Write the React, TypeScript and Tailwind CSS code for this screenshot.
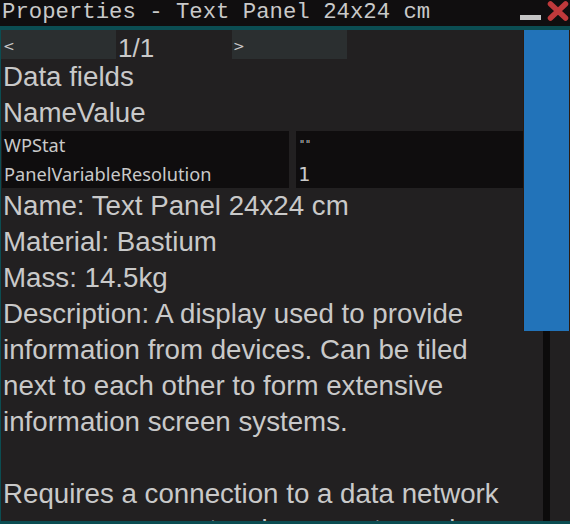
import React from "react";

const big = "font-['Liberation_Sans',Arial,sans-serif] text-[27.7px] leading-[36px] text-[#c9c9c9] whitespace-nowrap";

export default function App() {
  return (
    <div className="w-[570px] h-[524px] flex flex-col bg-[#100e0f] overflow-hidden">
      {/* title bar */}
      <div className="h-[26px] flex items-start shrink-0">
        <div className="pl-[2px] font-['Liberation_Mono',monospace] text-[22.3px] leading-[24px] text-[#c9c9c9] whitespace-nowrap">
          Properties - Text Panel 24x24 cm
        </div>
        <div className="flex-1" />
        <div className="w-[21px] h-[5px] bg-[#c4c4c4] mt-[15px] mr-[6px]" />
        <svg width="22" height="20" viewBox="0 0 22 20" className="mt-[1px] mr-[1px]">
          <path d="M3.5 3 L18.5 17 M18.5 3 L3.5 17" stroke="#c0393b" strokeWidth="5.5" strokeLinecap="round" />
        </svg>
      </div>
      <div className="h-[4px] bg-[#0b4d52] shrink-0" />
      {/* body */}
      <div className="flex-1 flex bg-[#222021] border-l border-b-[3px] border-[#0b4d52] overflow-hidden">
        <div className="w-[522px] flex flex-col overflow-hidden shrink-0">
          {/* nav row */}
          <div className="h-[29px] flex shrink-0">
            <div className="w-[115px] bg-[#2b2f30] pl-[2px] pt-[3px] flex items-center font-['DejaVu_Sans',sans-serif] text-[14px] text-[#c9c9c9]">&lt;</div>
            <div className="w-[116px] pl-[2px] font-['Liberation_Sans',Arial,sans-serif] text-[26px] leading-[36px] text-[#c9c9c9]">1/1</div>
            <div className="w-[115px] bg-[#2b2f30] pl-[1px] pt-[3px] flex items-center font-['DejaVu_Sans',sans-serif] text-[14px] text-[#c9c9c9]">&gt;</div>
          </div>
          <div className={`pl-[2px] ${big}`}>Data fields</div>
          <div className={`pl-[2px] ${big}`}>NameValue</div>
          {/* table */}
          <div className="h-[57px] flex gap-[7px] shrink-0 pl-[1px]">
            <div className="w-[287px] bg-[#0f0d0e] flex flex-col font-['Noto_Sans',sans-serif] text-[18.2px] text-[#c9c9c9]">
              <div className="h-[28px] pl-[2px] flex items-center pt-[2px]">WPStat</div>
              <div className="h-[29px] pl-[2px] flex items-center pt-[2px]">PanelVariableResolution</div>
            </div>
            <div className="flex-1 bg-[#0f0d0e] flex flex-col text-[#c9c9c9]">
              <div className="h-[28px] pl-[3px] font-['DejaVu_Sans_Mono',monospace] text-[10px] leading-[10px] pt-[9px]">""</div>
              <div className="h-[29px] pl-[2px] flex items-end pb-[4px] font-['DejaVu_Sans_Mono',monospace] text-[20px] leading-[20px]">1</div>
            </div>
          </div>
          <div className={`pl-[2px] ${big}`}>Name: Text Panel 24x24 cm</div>
          <div className={`pl-[2px] ${big}`}>Material: Bastium</div>
          <div className={`pl-[2px] ${big}`}>Mass: 14.5kg</div>
          <div className={`pl-[2px] ${big}`}>
            Description: A display used to provide
            <br />
            information from devices. Can be tiled
            <br />
            next to each other to form extensive
            <br />
            information screen systems.
            <br />
            <br />
            Requires a connection to a data network
            <br />
            on a common network source to work.
          </div>
        </div>
        {/* scrollbar */}
        <div className="flex-1 flex flex-col">
          <div className="h-[301px] bg-[#2273b9] border-l border-r border-[#2a1a10] shrink-0" />
          <div className="flex-1 pl-[20px]">
            <div className="w-[7px] h-full bg-[#0c0b0b]" />
          </div>
        </div>
      </div>
    </div>
  );
}
